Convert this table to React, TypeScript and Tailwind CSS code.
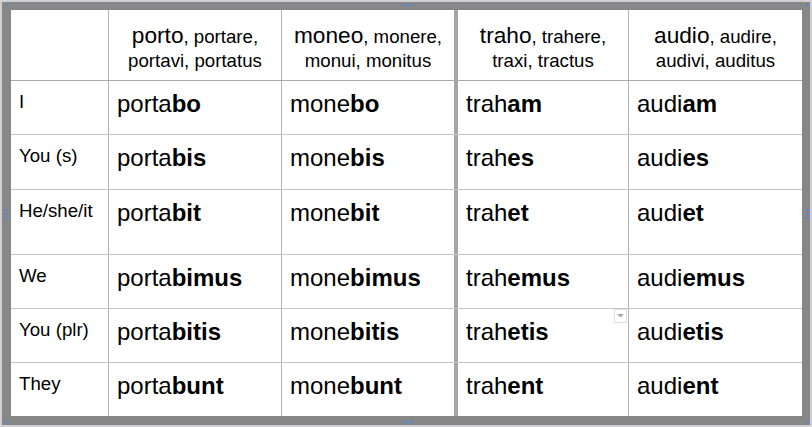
import React from "react";

const rows: { label: string; h: string; endings: [string, string, string, string] }[] = [
  { label: "I", h: "h-[54px]", endings: ["bo", "bo", "am", "am"] },
  { label: "You (s)", h: "h-[55px]", endings: ["bis", "bis", "es", "es"] },
  { label: "He/she/it", h: "h-[65px]", endings: ["bit", "bit", "et", "et"] },
  { label: "We", h: "h-[54px]", endings: ["bimus", "bimus", "emus", "emus"] },
  { label: "You (plr)", h: "h-[54px]", endings: ["bitis", "bitis", "etis", "etis"] },
  { label: "They", h: "h-[54px]", endings: ["bunt", "bunt", "ent", "ent"] },
];

const stems = ["porta", "mone", "trah", "audi"];

const headers: [string, string, string][] = [
  ["porto", ", portare,", "portavi, portatus"],
  ["moneo", ", monere,", "monui, monitus"],
  ["traho", ", trahere,", "traxi, tractus"],
  ["audio", ", audire,", "audivi, auditus"],
];

const colCls = [
  "w-[173px] border-l border-[#b3b3b3]",
  "w-[173px] border-l border-[#b3b3b3]",
  "w-[174px] border-l-4 border-[#a6a6a6]",
  "w-[174px] border-l border-[#b3b3b3]",
];

function Dot() {
  return <div className="w-[2px] h-[2px] bg-[#4a86e8]" />;
}

function Triple({ vertical }: { vertical?: boolean }) {
  return (
    <div className={"flex gap-[2px] " + (vertical ? "flex-col" : "flex-row")}>
      <Dot />
      <Dot />
      <Dot />
    </div>
  );
}

export default function App() {
  return (
    <div
      className="relative w-[812px] h-[427px] border-2 border-[#d0d0d4] bg-[#878787] pt-[8px] pl-[9px] pr-[8px] pb-[9px] text-black"
      style={{ fontFamily: '"Liberation Sans", Arial, sans-serif' }}
    >
      <div className="flex flex-col w-[791px] h-[406px] bg-white">
        {/* header */}
        <div className="flex h-[70px]">
          <div className="w-[97px]" />
          {headers.map((h, i) => (
            <div
              key={i}
              className={colCls[i] + " pt-[13px] text-center text-[18.67px] leading-[24px]"}
            >
              <span className="text-[22.67px]">{h[0]}</span>
              {h[1]}
              <br />
              {h[2]}
            </div>
          ))}
        </div>
        {rows.map((r, ri) => (
          <div
            key={ri}
            className={
              "flex border-t " +
              (ri === 0 ? "border-[#a9a9a9] " : "border-[#c4c4c4] ") +
              r.h
            }
          >
            <div className="w-[97px] pl-2 pt-[10px] text-[18.67px] leading-[21px]">{r.label}</div>
            {stems.map((s, ci) => (
              <div
                key={ci}
                className={colCls[ci] + " relative pl-2 pt-[9px] text-[24px] leading-[28px]"}
              >
                {s}
                <span className="font-bold">{r.endings[ci]}</span>
                {ri === 4 && ci === 2 && (
                  <div className="absolute right-[1px] top-0 w-[13px] h-[14px] border border-[#dedede] bg-white flex items-center justify-center">
                    <svg width="7" height="4" viewBox="0 0 7 4">
                      <path d="M0 0 L7 0 L3.5 3.5 Z" fill="#a8a8a8" />
                    </svg>
                  </div>
                )}
              </div>
            ))}
          </div>
        ))}
      </div>

      {/* selection handles overlay */}
      <div className="absolute inset-0 pointer-events-none flex flex-col justify-between pl-[3px] pr-[2px] pt-[2px] pb-[2px]">
        <div className="flex justify-between items-start">
          <Dot />
          <Triple />
          <Dot />
        </div>
        <div className="flex justify-between items-center">
          <Triple vertical />
          <Triple vertical />
        </div>
        <div className="flex justify-between items-end">
          <Dot />
          <Triple />
          <Dot />
        </div>
      </div>
    </div>
  );
}
